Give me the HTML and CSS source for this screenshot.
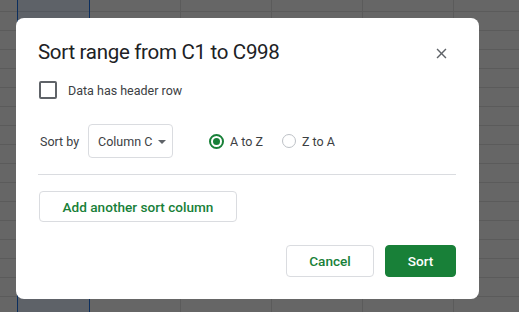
FILE: index.html
```html
<!DOCTYPE html>
<html>
<head>
<meta charset="utf-8">
<link rel="stylesheet" href="styles.css">
</head>
<body>
<div class="sheet">
  <div class="col c-a"></div>
  <div class="col c-sel"></div>
  <div class="col"></div>
  <div class="col"></div>
  <div class="col"></div>
  <div class="col"></div>
  <div class="col c-rest"></div>
</div>
<div class="dialog">
  <div class="head">
    <div class="title">Sort range from C1 to C998</div>
    <svg class="close" viewBox="0 0 24 24" width="17" height="17"><path d="M19 6.41L17.59 5 12 10.59 6.41 5 5 6.41 10.59 12 5 17.59 6.41 19 12 13.41 17.59 19 19 17.59 13.41 12z" fill="#5f6368"/></svg>
  </div>
  <div class="check-row">
    <span class="checkbox"></span>
    <span class="check-label">Data has header row</span>
  </div>
  <div class="sort-row">
    <span class="sort-by">Sort by</span>
    <div class="select">
      <span>Column C</span>
      <span class="caret"></span>
    </div>
    <div class="radios">
      <div class="radio-item"><span class="radio on"></span><span class="radio-label">A to Z</span></div>
      <div class="radio-item"><span class="radio"></span><span class="radio-label">Z to A</span></div>
    </div>
  </div>
  <div class="divider"></div>
  <div class="add-row"><button class="btn add">Add another sort column</button></div>
  <div class="footer">
    <button class="btn cancel">Cancel</button>
    <button class="btn primary">Sort</button>
  </div>
</div>
</body>
</html>
```
FILE: styles.css
```css
html, body {
  margin: 0;
  padding: 0;
  width: 519px;
  height: 312px;
  overflow: hidden;
  background: #666666;
  font-family: Roboto, "Liberation Sans", Arial, sans-serif;
}
.sheet {
  display: flex;
  height: 312px;
  background-image: repeating-linear-gradient(to bottom, transparent 0, transparent 15px, #5b5b5b 15px, #5b5b5b 16px, transparent 16px, transparent 19px);
  background-position: 0 -4px;
  background-size: 100% 19px;
}
.col {
  width: 90px;
  height: 100%;
  border-right: 1px solid #5b5b5b;
  flex: none;
}
.c-a {
  width: 17px;
}
.c-sel {
  width: 71px;
  border-left: 1px solid #0b2e5e;
  border-right: 1px solid #0b2e5e;
  margin-left: -1px;
  background-color: rgba(40, 70, 120, 0.12);
}
.c-rest {
  border-right: none;
}
.dialog {
  position: absolute;
  left: 16px;
  top: 18px;
  width: 463px;
  height: 281px;
  box-sizing: border-box;
  padding: 20px 23px 22px 22px;
  background: #fff;
  border-radius: 8px;
  display: flex;
  flex-direction: column;
}
.head {
  display: flex;
  align-items: center;
  justify-content: space-between;
  height: 28px;
}
.title {
  font-family: Roboto, "Open Sans", sans-serif;
  font-size: 20.5px;
  letter-spacing: -0.3px;
  color: #202124;
  line-height: 28px;
}
.close {
  margin-right: 6px;
  margin-top: 2px;
}
.check-row {
  margin-top: 15px;
  display: flex;
  align-items: center;
  height: 18px;
}
.checkbox {
  width: 14px;
  height: 14px;
  border: 2px solid #5f6368;
  border-radius: 2px;
  margin-left: 1px;
}
.check-label {
  margin-left: 11px;
  font-size: 12.5px;
  color: #3c4043;
}
.sort-row {
  margin-top: 25px;
  display: flex;
  align-items: center;
  height: 34px;
}
.sort-by {
  font-size: 12.5px;
  color: #3c4043;
  margin-left: 2px;
  width: 48px;
}
.select {
  width: 85px;
  height: 34px;
  box-sizing: border-box;
  border: 1px solid #dadce0;
  border-radius: 4px;
  display: flex;
  align-items: center;
  padding-left: 9px;
  font-size: 12.5px;
  color: #3c4043;
}
.caret {
  margin-left: 6px;
  width: 0;
  height: 0;
  border-left: 4px solid transparent;
  border-right: 4px solid transparent;
  border-top: 4px solid #5f6368;
  margin-top: 1px;
}
.radios {
  display: flex;
  align-items: center;
  margin-left: 36px;
}
.radio-item {
  display: flex;
  align-items: center;
  margin-right: 19px;
}
.radio {
  width: 12px;
  height: 12px;
  border: 1.5px solid #bdc1c6;
  border-radius: 50%;
  display: flex;
  align-items: center;
  justify-content: center;
}
.radio.on {
  border: 2px solid #188038;
  width: 11px;
  height: 11px;
}
.radio.on::after {
  content: "";
  width: 7px;
  height: 7px;
  border-radius: 50%;
  background: #188038;
}
.radio-label {
  margin-left: 6px;
  font-size: 12.5px;
  color: #3c4043;
}
.divider {
  margin-top: 16px;
  height: 1px;
  background: #dadce0;
}
.add-row {
  margin-top: 16px;
  display: flex;
}
.btn {
  font-family: Roboto, "Liberation Sans", Arial, sans-serif;
  font-size: 13.6px;
  font-weight: 500;
  height: 32px;
  box-sizing: border-box;
  border-radius: 4px;
  border: 1px solid #dadce0;
  background: #fff;
  color: #188038;
  padding: 0;
  cursor: pointer;
}
.add {
  width: 198px;
  height: 31px;
  margin-left: 1px;
}
.footer {
  margin-top: auto;
  display: flex;
  justify-content: flex-end;
  gap: 11px;
}
.cancel {
  width: 88px;
}
.primary {
  width: 71px;
  background: #188038;
  border-color: #188038;
  color: #fff;
}
```
